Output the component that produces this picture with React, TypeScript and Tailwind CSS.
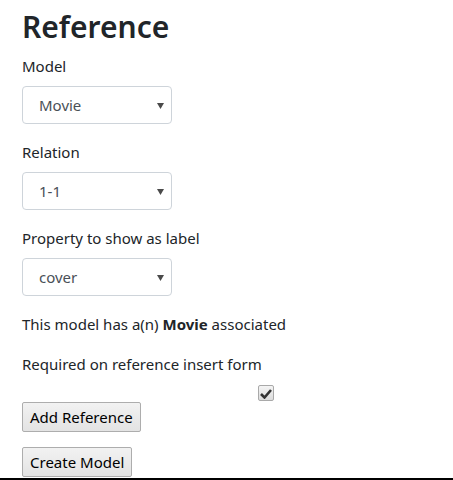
import React from 'react';

const font = { fontFamily: '"Noto Sans", "Open Sans", sans-serif' };

const Select: React.FC<{ value: string; options: string[] }> = ({ value, options }) => (
  <div className="relative w-[150px]">
    <select
      defaultValue={value}
      className="block h-[38px] w-full appearance-none rounded-[4px] border border-[#ced4da] bg-white pl-4 pr-8 text-[15px] text-[#495057] outline-none"
    >
      {options.map(o => (
        <option key={o}>{o}</option>
      ))}
    </select>
    <svg className="pointer-events-none absolute right-[8px] top-[17px]" width="7" height="6" viewBox="0 0 7 6">
      <path d="M0 0h7L3.5 6z" fill="#4a4a4a" />
    </svg>
  </div>
);

const Field: React.FC<{ label: string; value: string; options: string[] }> = ({ label, value, options }) => (
  <div className="mb-4">
    <label className="mb-2 block text-[15px] leading-6">{label}</label>
    <Select value={value} options={options} />
  </div>
);

const Button: React.FC<{ children: React.ReactNode }> = ({ children }) => (
  <button className="h-[30px] rounded-[2px] border border-[#adadad] bg-gradient-to-b from-[#f2f2f2] to-[#e3e3e3] px-[7px] text-[15px] leading-none text-black">
    {children}
  </button>
);

export default function App() {
  return (
    <div className="flex h-[480px] w-[453px] flex-col bg-white text-[#212529]" style={font}>
      <div className="px-[22px] pt-[6px]">
        <h1 className="mb-[6px] text-[30px] font-semibold leading-[42px] text-[#212529]">Reference</h1>
        <Field label="Model" value="Movie" options={['Movie', 'Actor', 'Director']} />
        <Field label="Relation" value="1-1" options={['1-1', '1-n', 'n-n']} />
        <Field label="Property to show as label" value="cover" options={['cover', 'title', 'year']} />
        <p className="mb-4 text-[15px] leading-6">
          This model has a(n) <b className="font-bold">Movie</b> associated
        </p>
        <p className="text-[15px] leading-6">Required on reference insert form</p>
        <div className="flex h-[25px] items-end pl-[236px]">
          <span className="flex h-[16px] w-[16px] items-center justify-center rounded-[2px] border border-[#a9a9a9] bg-gradient-to-b from-[#f4f4f4] to-[#dcdcdc]">
            <svg width="12" height="11" viewBox="0 0 12 11">
              <path d="M1 6l3.5 3.5L11 2" fill="none" stroke="#333" strokeWidth="2.6" />
            </svg>
          </span>
        </div>
        <div className="mb-[15px] pt-[1px]">
          <Button>Add Reference</Button>
        </div>
        <Button>Create Model</Button>
      </div>
      <div className="flex-1" />
      <div className="h-[2px] shrink-0 bg-black" />
    </div>
  );
}
